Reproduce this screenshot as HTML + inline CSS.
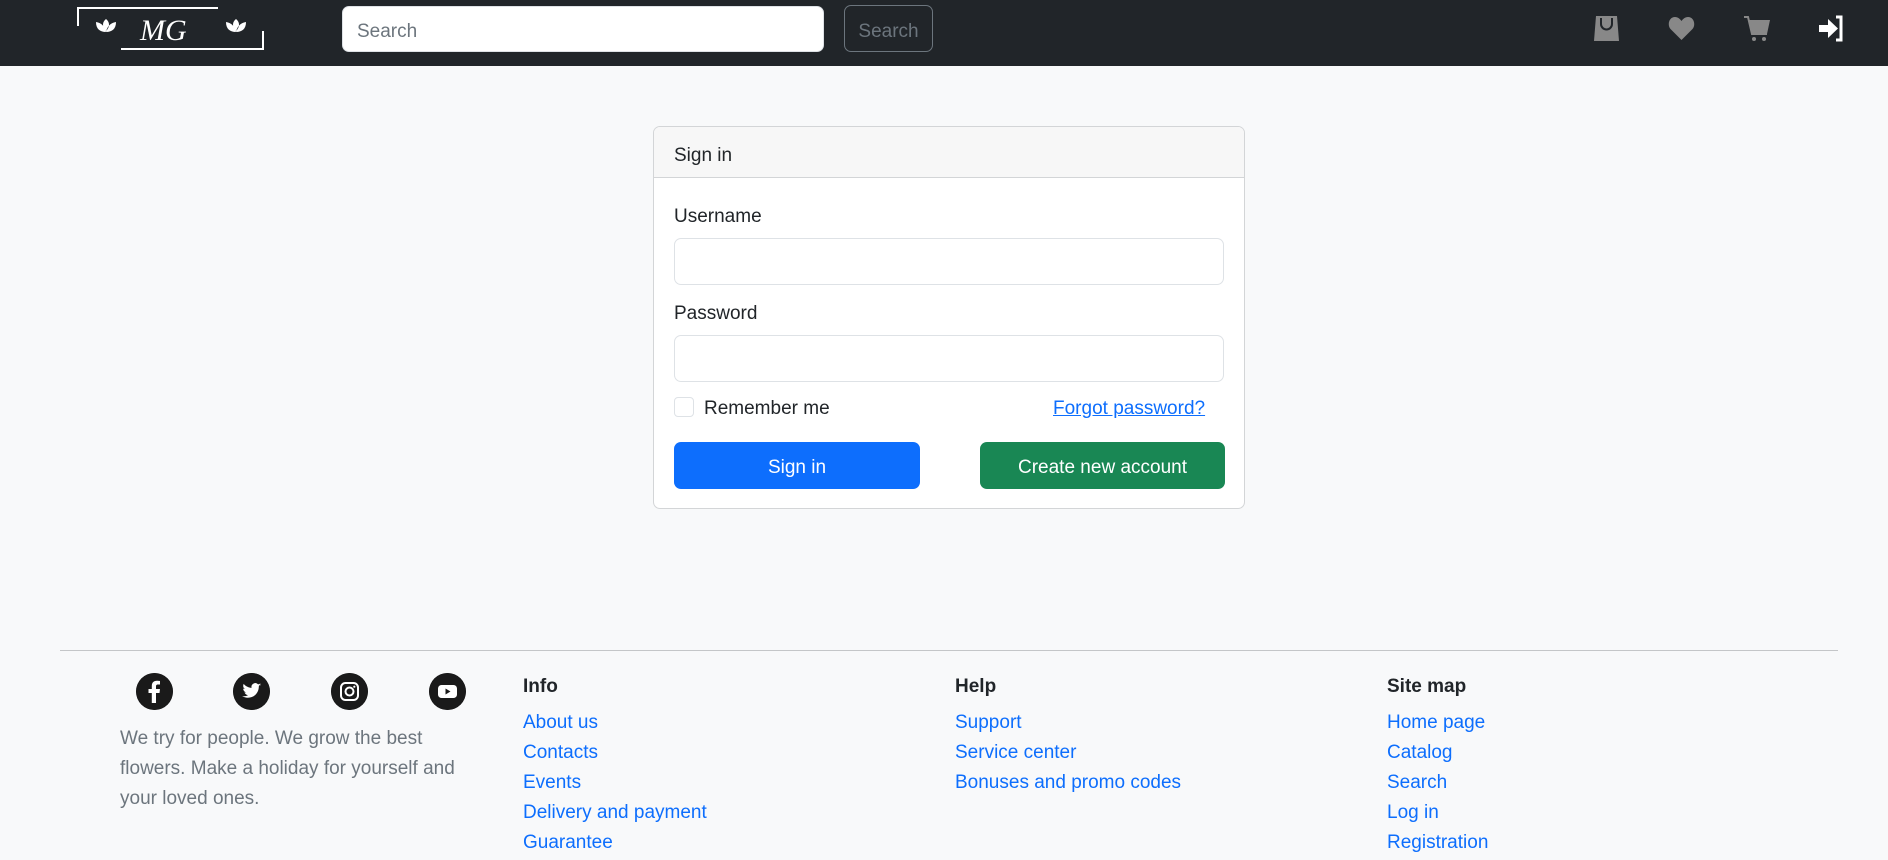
<!DOCTYPE html>
<html><head><meta charset="utf-8"><style>
*{box-sizing:border-box;margin:0;padding:0}
body{width:1888px;height:860px;background:#f8f9fa;font-family:"Liberation Sans",sans-serif;font-size:19px;color:#212529;position:relative;overflow:hidden}
.abs{position:absolute}
.nav{left:0;top:0;width:1888px;height:66px;background:#212529}
.inp{background:#fff;border:1px solid #dee2e6;border-radius:7px}
a{color:#0d6efd;text-decoration:none}
.lnk{position:absolute;font-size:19px;line-height:30px}
.soc{width:37px;height:37px;border-radius:50%;background:#1a1a1a}
</style></head><body>
<div class="abs nav"></div>
<!-- logo -->
<svg class="abs" style="left:76px;top:6px" width="190" height="46" viewBox="0 0 190 46">
<polyline points="2,20 2,2 142,2" fill="none" stroke="#fff" stroke-width="2"/>
<polyline points="45,43 187,43 187,25" fill="none" stroke="#fff" stroke-width="2"/>
<g fill="#fff"><path d="M30 13c-4 3-4 8 0 12c4-4 4-9 0-12z M20 16c0 7 4 10 10 10c-1-5-4-9-10-10z M40 16c0 7-4 10-10 10c1-5 4-9 10-10z"/>
<path d="M160 13c-4 3-4 8 0 12c4-4 4-9 0-12z M150 16c0 7 4 10 10 10c-1-5-4-9-10-10z M170 16c0 7-4 10-10 10c1-5 4-9 10-10z"/></g>
<text x="64" y="34" fill="#fff" font-family="Liberation Serif,serif" font-style="italic" font-size="30">MG</text>
</svg>
<div class="abs inp" style="left:342px;top:6px;width:482px;height:46px;border-radius:7px"></div>
<div class="abs" style="left:357px;top:9px;line-height:46px;color:#6c757d;font-size:19px">Search</div>
<div class="abs" style="left:844px;top:5px;width:89px;height:47px;border:1px solid #6c757d;border-radius:7px;color:#6c757d;text-align:center;line-height:51px;font-size:19px">Search</div>
<!-- icons -->
<svg class="abs" style="left:1593px;top:15px" width="27" height="27" viewBox="0 0 27 27"><path d="M3 1h21l2 25H1z" fill="#888"/><path d="M8 3v6a5.5 5.5 0 0 0 11 0V3" fill="none" stroke="#212529" stroke-width="2"/></svg>
<svg class="abs" style="left:1668px;top:15px" width="27" height="26" viewBox="0 0 27 26"><path d="M13.5 25L2.5 14C-1 10 1 2 7 2c3 0 5 2 6.5 4C15 4 17 2 20 2c6 0 8 8 4.5 12z" fill="#888"/></svg>
<svg class="abs" style="left:1743px;top:15px" width="28" height="28" viewBox="0 0 28 28"><path d="M6 5h21l-3 14H9z" fill="#888"/><path d="M1 2h4l4 17h15" fill="none" stroke="#888" stroke-width="2"/><circle cx="11" cy="24" r="2" fill="#888"/><circle cx="21" cy="24" r="2" fill="#888"/></svg>
<svg class="abs" style="left:1818px;top:15px" width="26" height="27" viewBox="0 0 26 27"><path d="M1 10h9V4l10 9.5L10 23v-6H1z" fill="#fff"/><path d="M18 2h5v23h-5" fill="none" stroke="#fff" stroke-width="3"/></svg>
<!-- card -->
<div class="abs" style="left:653px;top:126px;width:592px;height:383px;background:#fff;border:1px solid #d3d5d7;border-radius:7px;overflow:hidden">
<div style="height:51px;background:#f7f7f7;border-bottom:1px solid #d3d5d7;padding-left:20px;padding-top:3px;line-height:51px;font-size:19px">Sign in</div>
</div>
<div class="abs" style="left:674px;top:203px;line-height:28px">Username</div>
<div class="abs inp" style="left:674px;top:238px;width:550px;height:47px"></div>
<div class="abs" style="left:674px;top:300px;line-height:28px">Password</div>
<div class="abs inp" style="left:674px;top:335px;width:550px;height:47px"></div>
<div class="abs" style="left:674px;top:397px;width:20px;height:20px;border:1px solid #dee2e6;border-radius:4px;background:#fff"></div>
<div class="abs" style="left:704px;top:395px;line-height:28px">Remember me</div>
<a class="abs" style="left:1053px;top:395px;line-height:28px;text-decoration:underline">Forgot password?</a>
<div class="abs" style="left:674px;top:442px;width:246px;height:47px;background:#0d6efd;border-radius:7px;color:#fff;text-align:center;line-height:51px">Sign in</div>
<div class="abs" style="left:980px;top:442px;width:245px;height:47px;background:#198754;border-radius:7px;color:#fff;text-align:center;line-height:51px">Create new account</div>
<!-- footer -->
<div class="abs" style="left:60px;top:650px;width:1778px;height:1px;background:#c4c6c8"></div>
<svg class="abs soc" style="left:136px;top:673px" viewBox="0 0 37 37"><circle cx="18.5" cy="18.5" r="18.5" fill="#1a1a1a"/><path d="M20 30V20h3.5l.5-4h-4v-2.5c0-1.2.4-2 2-2h2V8c-.5 0-1.8-.2-3.2-.2-3 0-5 1.8-5 5.2V16h-3.3v4h3.3v10z" fill="#fff"/></svg>
<svg class="abs soc" style="left:233px;top:673px" viewBox="0 0 37 37"><circle cx="18.5" cy="18.5" r="18.5" fill="#1a1a1a"/><path d="M28 12c-.7.3-1.4.5-2.2.6.8-.5 1.4-1.2 1.7-2.1-.8.4-1.6.8-2.4.9a3.8 3.8 0 0 0-6.5 3.5c-3.2-.2-6-1.7-7.9-4-1 1.8-.5 4 1.2 5.1-.6 0-1.200-.2-1.7-.5 0 1.9 1.3 3.5 3 3.8-.6.2-1.2.2-1.7.1.5 1.5 1.9 2.6 3.6 2.7A7.7 7.7 0 0 1 9 23c1.7 1.1 3.7 1.7 5.9 1.7 7.1 0 11.1-6 10.9-11.4.8-.5 1.4-1.2 1.9-1.900z" fill="#fff"/></svg>
<svg class="abs soc" style="left:331px;top:673px" viewBox="0 0 37 37"><circle cx="18.5" cy="18.5" r="18.5" fill="#1a1a1a"/><rect x="10" y="10" width="17" height="17" rx="4.5" fill="none" stroke="#fff" stroke-width="2"/><circle cx="18.5" cy="18.5" r="4" fill="none" stroke="#fff" stroke-width="2"/><circle cx="23.3" cy="13.7" r="1.1" fill="#fff"/></svg>
<svg class="abs soc" style="left:429px;top:673px" viewBox="0 0 37 37"><circle cx="18.5" cy="18.5" r="18.5" fill="#1a1a1a"/><rect x="9" y="12" width="19" height="13" rx="3.5" fill="#fff"/><path d="M16.5 15.5v6l5-3z" fill="#1a1a1a"/></svg>
<div class="abs" style="left:120px;top:724px;width:370px;line-height:30px;color:#6c757d">We try for people. We grow the best flowers. Make a holiday for yourself and your loved ones.</div>
<div class="abs" style="left:523px;top:672px;line-height:30px;font-weight:bold">Info</div>
<a class="lnk" style="left:523px;top:708px">About us</a>
<a class="lnk" style="left:523px;top:738px">Contacts</a>
<a class="lnk" style="left:523px;top:768px">Events</a>
<a class="lnk" style="left:523px;top:798px">Delivery and payment</a>
<a class="lnk" style="left:523px;top:828px">Guarantee</a>
<div class="abs" style="left:955px;top:672px;line-height:30px;font-weight:bold">Help</div>
<a class="lnk" style="left:955px;top:708px">Support</a>
<a class="lnk" style="left:955px;top:738px">Service center</a>
<a class="lnk" style="left:955px;top:768px">Bonuses and promo codes</a>
<div class="abs" style="left:1387px;top:672px;line-height:30px;font-weight:bold">Site map</div>
<a class="lnk" style="left:1387px;top:708px">Home page</a>
<a class="lnk" style="left:1387px;top:738px">Catalog</a>
<a class="lnk" style="left:1387px;top:768px">Search</a>
<a class="lnk" style="left:1387px;top:798px">Log in</a>
<a class="lnk" style="left:1387px;top:828px">Registration</a>
</body></html>
